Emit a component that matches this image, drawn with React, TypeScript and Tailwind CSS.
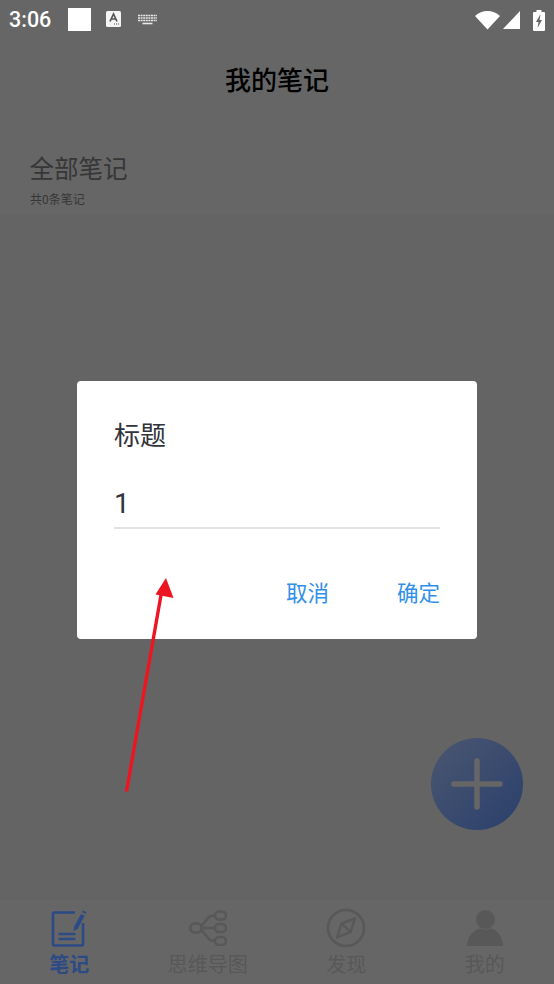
import React from "react";

const cjk = { fontFamily: '"Noto Sans CJK SC", "Noto Sans", sans-serif' };

function NoteIcon() {
  return (
    <svg width="36" height="37" viewBox="0 0 36 37" fill="none">
      <path d="M24 2.5H3.5a1.5 1.5 0 0 0-1.5 1.5v30a1.5 1.5 0 0 0 1.5 1.5h27a1.5 1.5 0 0 0 1.5-1.5V13" stroke="#2c4a85" strokeWidth="2.6" />
      <path d="M23 17 L30 4 L33.6 6 L26.5 19 L22.6 21 Z" fill="#2c4a85" />
      <path d="M31 2 L32 0.5 L35.5 2.2 L34.6 4 Z" fill="#2c4a85" />
      <path d="M7.5 24h17M7.5 29h17" stroke="#2c4a85" strokeWidth="2.6" />
    </svg>
  );
}

function MindIcon() {
  return (
    <svg width="38" height="36" viewBox="0 0 38 36" fill="none" stroke="#585858" strokeWidth="2.6">
      <rect x="1.5" y="13.5" width="11" height="9" rx="4" />
      <rect x="26" y="1.5" width="11" height="8" rx="4" />
      <rect x="26" y="14" width="11" height="8" rx="4" />
      <rect x="26" y="27" width="11" height="8" rx="4" />
      <path d="M12.5 16 L20 7 Q21.5 5.5 26 5.5 M12.5 18h13.5 M12.5 20 L20 29 Q21.5 31 26 31" />
    </svg>
  );
}

function CompassIcon() {
  return (
    <svg width="40" height="40" viewBox="0 0 40 40" fill="none" stroke="#585858">
      <circle cx="20" cy="20" r="18" strokeWidth="2.6" />
      <path d="M29 10.5 L24.5 24 L11 29.5 L15.5 15.5 Z M15.5 15.5 L24.5 24" strokeWidth="2.4" strokeLinejoin="round" />
    </svg>
  );
}

function PersonIcon() {
  return (
    <svg width="36" height="36" viewBox="0 0 36 36" fill="#585858">
      <circle cx="18.5" cy="9.5" r="9.5" />
      <path d="M0 36 C0 27 7 19 14 18.5 C16 20 21 20 23 18.5 C30 19 36 27 36 36 Z" />
    </svg>
  );
}

function NavItem({ icon, label, active }: { icon: React.ReactNode; label: string; active?: boolean }) {
  return (
    <div className="flex flex-col items-center">
      <div className="flex h-[40px] items-center justify-center">{icon}</div>
      <span
        className={active ? "mt-[2px] text-[20px] leading-[28px] font-bold text-[#2c4a85]" : "mt-[2px] text-[20px] leading-[28px] text-[#585858]"}
      >
        {label}
      </span>
    </div>
  );
}

export default function App() {
  return (
    <div className="relative flex h-[984px] w-[554px] flex-col overflow-hidden bg-[#666666]" style={cjk}>
      {/* status bar */}
      <div className="flex h-[40px] shrink-0 items-center pr-[9px] pl-[9px] text-white">
        <span className="w-[44px] text-[21.5px] leading-[38px] font-medium" style={{ fontFamily: "Roboto, sans-serif" }}>
          3:06
        </span>
        <div className="mb-[1px] ml-[15px] h-[23px] w-[23px] bg-white" />
        <svg className="mb-[2px] ml-[15px]" width="15" height="16" viewBox="0 0 15 16">
          <rect width="15" height="16" rx="1.5" fill="#f4f4f4" />
          <path d="M4 10.5 L7.5 3 L11 10.5 M5.3 8h4.4" fill="none" stroke="#555" strokeWidth="1.7" />
          <path d="M8 13h1M10 13h1M12 13h1" stroke="#555" strokeWidth="1" />
        </svg>
        <svg className="mb-[2px] ml-[17px]" width="19" height="11" viewBox="0 0 19 11" fill="none" stroke="#e8e8e8">
          <path d="M0 1.5h19M0 4h19M0 6.5h19" strokeWidth="1.6" strokeDasharray="2 .6" />
          <path d="M4.5 9.5h10" strokeWidth="1.6" />
        </svg>
        <div className="flex-1" />
        <svg width="25" height="19" viewBox="0 0 25 19" fill="white">
          <path d="M0 5 C7 -1.6 18 -1.6 25 5 L12.5 18.5 Z" />
        </svg>
        <svg className="mr-[1px] ml-[3px]" width="17" height="18" viewBox="0 0 17 18" fill="white">
          <path d="M17 0 V18 H0 Z" />
        </svg>
        <svg className="ml-[12px]" width="12" height="21" viewBox="0 0 12 21" fill="white">
          <path fillRule="evenodd" d="M3.5 0h5v2H11a1 1 0 0 1 1 1v17a1 1 0 0 1-1 1H1a1 1 0 0 1-1-1V3a1 1 0 0 1 1-1h2.5Z M7 5 L3 12h2.5L4.5 18 L9 10H6.5L7.5 5Z" />
        </svg>
      </div>

      {/* title */}
      <div className="flex h-[76px] shrink-0 items-center justify-center text-[26px] font-medium text-black">我的笔记</div>

      {/* list header */}
      <div className="flex h-[98px] shrink-0 flex-col bg-[#666666] pt-[35px] pl-[30px] text-[#363636]">
        <span className="ml-[-0.5px] text-[24.5px] leading-[33px]">全部笔记</span>
        <span className="mt-[7px] text-[12px] leading-[16px]">共0条笔记</span>
      </div>

      {/* list body */}
      <div className="min-h-0 flex-1 bg-[#646464]" />

      {/* bottom navigation */}
      <div className="grid h-[85px] shrink-0 grid-cols-4 border-t border-[#626262] bg-[#666666] pt-[8px]">
        <NavItem icon={<NoteIcon />} label="笔记" active />
        <NavItem icon={<MindIcon />} label="思维导图" />
        <NavItem icon={<CompassIcon />} label="发现" />
        <NavItem icon={<PersonIcon />} label="我的" />
      </div>

      {/* floating button */}
      <div className="absolute top-[738px] left-[431px] flex h-[92px] w-[92px] items-center justify-center rounded-full bg-gradient-to-br from-[#4b5771] to-[#2a3f6b]">
        <svg width="52" height="52" viewBox="0 0 52 52" stroke="#666666" strokeWidth="5.5" strokeLinecap="round">
          <path d="M26 3v46M3 26h46" />
        </svg>
      </div>

      {/* dialog */}
      <div className="absolute top-[381px] left-[77px] flex h-[258px] w-[400px] flex-col rounded-[4px] bg-white px-[37px] pt-[35px]">
        <div className="text-[26px] leading-[36px] text-[#303339]">标题</div>
        <div className="mt-[24px] h-[53px] w-[326px] border-b-2 border-[#e2e2e2] text-[28px] leading-[56px] text-[#303339]" style={{ fontFamily: "Roboto, sans-serif" }}>
          1
        </div>
        <div className="mt-[48px] flex w-[326px] justify-end gap-[68px] text-[21.5px] leading-[30px] text-[#2f8fe9]">
          <span>取消</span>
          <span>确定</span>
        </div>
      </div>

      {/* annotation arrow */}
      <svg className="absolute top-[575px] left-[121px]" width="60" height="220" viewBox="0 0 60 220" fill="#ee1522">
        <path d="M5.5 216.5 L40 20" stroke="#ee1522" strokeWidth="3.4" fill="none" />
        <path d="M45 3 L52.5 23 L34.5 19.5 Z" />
      </svg>
    </div>
  );
}
